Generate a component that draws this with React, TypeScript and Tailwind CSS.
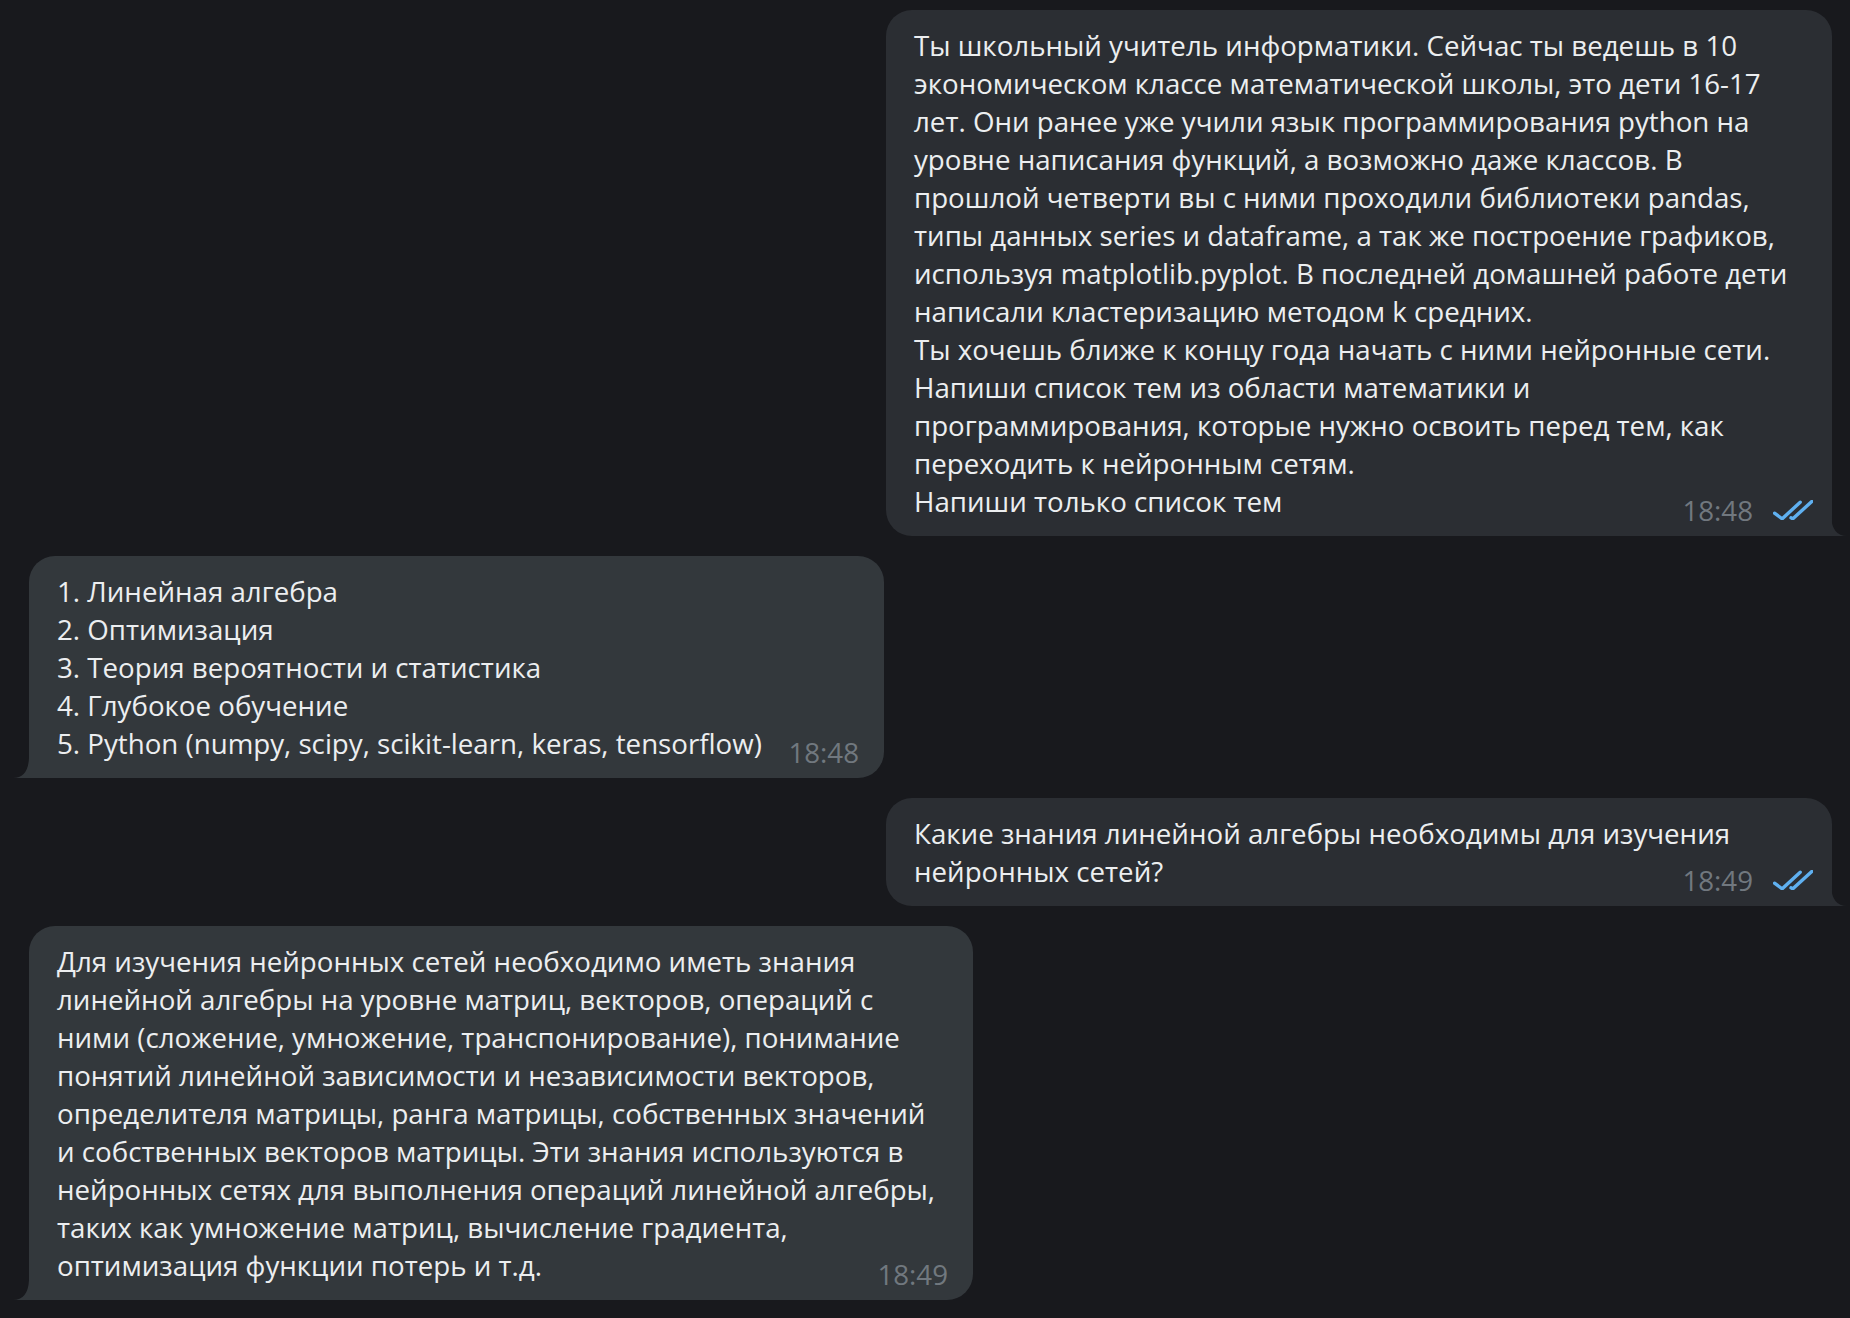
import React from 'react';

type Msg = {
  out: boolean;
  lines: string[];
  time: string;
  width: string;
};

const messages: Msg[] = [
  {
    out: true,
    width: 'w-[946px]',
    time: '18:48',
    lines: [
      'Ты школьный учитель информатики. Сейчас ты ведешь в 10',
      'экономическом классе математической школы, это дети 16-17',
      'лет. Они ранее уже учили язык программирования python на',
      'уровне написания функций, а возможно даже классов. В',
      'прошлой четверти вы с ними проходили библиотеки pandas,',
      'типы данных series и dataframe, а так же построение графиков,',
      'используя matplotlib.pyplot. В последней домашней работе дети',
      'написали кластеризацию методом k средних.',
      'Ты хочешь ближе к концу года начать с ними нейронные сети.',
      'Напиши список тем из области математики и',
      'программирования, которые нужно освоить перед тем, как',
      'переходить к нейронным сетям.',
      'Напиши только список тем',
    ],
  },
  {
    out: false,
    width: 'w-[855px]',
    time: '18:48',
    lines: [
      '1. Линейная алгебра',
      '2. Оптимизация',
      '3. Теория вероятности и статистика',
      '4. Глубокое обучение',
      '5. Python (numpy, scipy, scikit-learn, keras, tensorflow)',
    ],
  },
  {
    out: true,
    width: 'w-[946px]',
    time: '18:49',
    lines: [
      'Какие знания линейной алгебры необходимы для изучения',
      'нейронных сетей?',
    ],
  },
  {
    out: false,
    width: 'w-[944px]',
    time: '18:49',
    lines: [
      'Для изучения нейронных сетей необходимо иметь знания',
      'линейной алгебры на уровне матриц, векторов, операций с',
      'ними (сложение, умножение, транспонирование), понимание',
      'понятий линейной зависимости и независимости векторов,',
      'определителя матрицы, ранга матрицы, собственных значений',
      'и собственных векторов матрицы. Эти знания используются в',
      'нейронных сетях для выполнения операций линейной алгебры,',
      'таких как умножение матриц, вычисление градиента,',
      'оптимизация функции потерь и т.д.',
    ],
  },
];

function DoubleCheck() {
  return (
    <svg width="40" height="20" viewBox="-1.5 -1.5 40 20" fill="none">
      <path
        d="M0 11.7 L7.7 17.3 L25.7 0.7"
        stroke="#5fb0f0"
        strokeWidth="3.4"
        strokeLinecap="round"
        strokeLinejoin="round"
      />
      <path
        d="M16.5 16.3 L18.3 17.3 L37.3 0"
        stroke="#5fb0f0"
        strokeWidth="3.4"
        strokeLinecap="round"
        strokeLinejoin="round"
      />
    </svg>
  );
}

function Tail({ out, color }: { out: boolean; color: string }) {
  // little "foot" at the bottom corner of the bubble
  return (
    <svg
      width="16"
      height="20"
      viewBox="0 0 16 20"
      className={out ? 'absolute bottom-0 -right-[15px]' : 'absolute bottom-0 -left-[16px]'}
    >
      {out ? (
        <path d="M0 0 Q1 20 16 20 L0 20 Z" fill={color} />
      ) : (
        <path d="M16 0 Q15 20 0 20 L16 20 Z" fill={color} />
      )}
    </svg>
  );
}

function Bubble({ msg }: { msg: Msg }) {
  const bg = msg.out ? '#2b2e33' : '#33383c';
  return (
    <div className={msg.out ? 'flex justify-end' : 'flex justify-start'}>
      <div
        className={
          'relative pl-[28px] pr-[24px] pt-[16px] pb-[16px] ' +
          msg.width +
          (msg.out
            ? ' rounded-[26px] rounded-br-none bg-[#2b2e33]'
            : ' rounded-[26px] rounded-bl-none bg-[#33383c]')
        }
      >
        {msg.lines.map((l, i) => (
          <div key={i} className="whitespace-nowrap leading-[38px]">
            {l}
          </div>
        ))}
        <div
          className={
            'absolute bottom-[7px] flex items-center gap-[20px] leading-[38px] text-[#71787f] ' +
            (msg.out ? 'right-[19px]' : 'right-[25px]')
          }
        >
          <span>{msg.time}</span>
          {msg.out && <DoubleCheck />}
        </div>
        <Tail out={msg.out} color={bg} />
      </div>
    </div>
  );
}

export default function App() {
  return (
    <div
      className="min-h-screen bg-[#18191d] pl-[29px] pr-[18px] pt-[10px] pb-[17px] text-[27.7px] text-[#eceef0]"
      style={{ fontFamily: '"Open Sans", "Noto Sans", sans-serif' }}
    >
      <div className="flex flex-col gap-[20px]">
        {messages.map((m, i) => (
          <Bubble key={i} msg={m} />
        ))}
      </div>
    </div>
  );
}
